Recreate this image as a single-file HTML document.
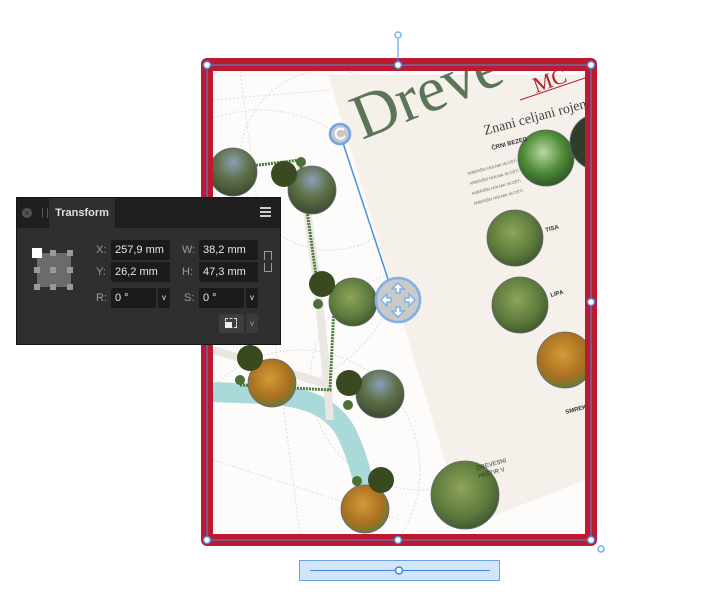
<!DOCTYPE html>
<html><head><meta charset="utf-8"><style>
body{margin:0;width:710px;height:601px;background:#fff;overflow:hidden;position:relative;font-family:"Liberation Sans",sans-serif}
svg{position:absolute;left:0;top:0}
.panel{position:absolute;left:16px;top:197px;width:265px;height:148px;background:#2f2f2f;border:1px solid #151515;box-sizing:border-box;color:#9a9a9a;font-size:11px}
.hdr{height:30px;background:#1f1f1f;position:relative}
.tab{position:absolute;left:32px;top:0;width:66px;height:30px;background:#2f2f2f;color:#e0e0e0;font-size:11px;line-height:30px;text-align:center;font-weight:bold}
.fld{position:absolute;background:#1b1b1b;color:#e6e6e6;font-size:11px;line-height:20px;padding-left:4px;box-sizing:border-box;height:20px;border-radius:2px}
.lb{position:absolute;font-size:11px;color:#999}
</style></head><body>
<svg width="710" height="601" viewBox="0 0 710 601">
<defs><clipPath id="c"><rect x="213" y="71" width="372" height="463"/></clipPath>
<radialGradient id="g1" cx=".45" cy=".4" r=".6"><stop offset="0" stop-color="#8fa35a"/><stop offset=".7" stop-color="#5b7a3c"/><stop offset="1" stop-color="#445a30"/></radialGradient>
<radialGradient id="g2" cx=".45" cy=".4" r=".6"><stop offset="0" stop-color="#d49a3a"/><stop offset=".7" stop-color="#a8701f"/><stop offset="1" stop-color="#6a7a3a"/></radialGradient>
<radialGradient id="g3" cx=".45" cy=".4" r=".6"><stop offset="0" stop-color="#b8d8a0"/><stop offset=".6" stop-color="#4e8c38"/><stop offset="1" stop-color="#2f5a28"/></radialGradient>
<radialGradient id="g4" cx=".5" cy=".3" r=".7"><stop offset="0" stop-color="#8aa0b8"/><stop offset=".5" stop-color="#5e7048"/><stop offset="1" stop-color="#3e4a30"/></radialGradient>
</defs>
<rect x="201" y="58" width="396" height="488" rx="6" fill="#bb1a30"/>
<rect x="213" y="71" width="372" height="463" fill="#fdfcfb"/>
<g clip-path="url(#c)">
<g stroke="#ddd" fill="none" stroke-width="1" stroke-dasharray="2 2">
<circle cx="300" cy="470" r="120"/><circle cx="260" cy="250" r="140"/><circle cx="420" cy="380" r="110"/><circle cx="330" cy="160" r="90"/>
<path d="M213 100 L330 90 M213 460 L400 520 M240 71 L300 534"/>
</g>
<polygon points="328,75 585,75 585,480 465,527" fill="#f5f0ea"/>
<path d="M213 392 C270 395 320 390 345 430 C360 460 362 480 368 500" stroke="#a9d9d9" stroke-width="20" fill="none"/>
<path d="M300 160 L318 290 L327 380 L330 420 M213 350 L330 385" stroke="#eae6e0" stroke-width="8" fill="none"/>
<path d="M250 166 L300 160 L318 290 M240 385 L330 390 L335 285" stroke="#4a7a3a" stroke-width="3" stroke-dasharray="2 1" fill="none"/>
<g stroke="#667" stroke-width=".8">
<circle cx="233" cy="172" r="24" fill="url(#g4)"/><circle cx="312" cy="190" r="24" fill="url(#g4)"/><circle cx="353" cy="302" r="24" fill="url(#g1)"/>
<circle cx="272" cy="383" r="24" fill="url(#g2)"/><circle cx="380" cy="394" r="24" fill="url(#g4)"/><circle cx="365" cy="509" r="24" fill="url(#g2)"/>
<circle cx="465" cy="495" r="34" fill="url(#g1)"/><circle cx="546" cy="158" r="28" fill="url(#g3)"/><circle cx="598" cy="142" r="28" fill="#2e3e28"/>
<circle cx="515" cy="238" r="28" fill="url(#g1)"/><circle cx="520" cy="305" r="28" fill="url(#g1)"/><circle cx="565" cy="360" r="28" fill="url(#g2)"/>
</g>
<g fill="#3a4a20"><circle cx="284" cy="174" r="13"/><circle cx="322" cy="284" r="13"/><circle cx="250" cy="358" r="13"/><circle cx="349" cy="383" r="13"/><circle cx="381" cy="480" r="13"/></g>
<g fill="#4a7035"><circle cx="301" cy="162" r="5"/><circle cx="318" cy="304" r="5"/><circle cx="240" cy="380" r="5"/><circle cx="348" cy="405" r="5"/><circle cx="357" cy="481" r="5"/></g>
<text x="0" y="0" transform="translate(362,140) rotate(-22)" font-family="Liberation Serif,serif" font-size="64" fill="#5a7558">Dreve</text>
<text x="0" y="0" transform="translate(536,93) rotate(-20)" font-family="Liberation Serif,serif" font-size="22" fill="#b02030">MC</text>
<path d="M520 100 L585 78" stroke="#b02030"/>
<text x="0" y="0" transform="translate(485,135) rotate(-15)" font-family="Liberation Serif,serif" font-size="14" fill="#444">Znani celjani rojeni</text>
<text x="0" y="0" transform="translate(492,150) rotate(-15)" font-size="6" font-weight="bold" fill="#333">ČRNI BEZEG</text>
<g fill="#666" font-size="4">
<text transform="translate(468,175) rotate(-15)">AMERIŠKI HOLNIK IN OŠTI</text><text transform="translate(470,185) rotate(-15)">AMERIŠKI HOLNIK IN OŠTI</text><text transform="translate(472,195) rotate(-15)">AMERIŠKI HOLNIK IN OŠTI</text><text transform="translate(474,205) rotate(-15)">AMERIŠKI HOLNIK IN OŠTI</text>
</g>
<text transform="translate(546,232) rotate(-15)" font-size="6" font-weight="bold" fill="#333">TISA</text>
<text transform="translate(551,297) rotate(-15)" font-size="6" font-weight="bold" fill="#333">LIPA</text>
<text transform="translate(566,414) rotate(-15)" font-size="6" font-weight="bold" fill="#333">SMREK</text>
<text transform="translate(477,470) rotate(-15)" font-size="6" fill="#333">DREVESNI</text>
<text transform="translate(479,478) rotate(-15)" font-size="6" fill="#333">PASTIR V</text>
</g>
<g stroke="#4a90e2" fill="none" stroke-width="1">
<rect x="207" y="65" width="384" height="475"/>
<line x1="398" y1="39" x2="398" y2="65"/>
<line x1="340" y1="134" x2="390" y2="285" stroke-width="1.5"/>
</g>
<circle cx="398" cy="35" r="3" fill="#fff" stroke="#7ab0ee" stroke-width="1.5"/>
<circle cx="601" cy="549" r="3" fill="#fff" stroke="#7ab0ee" stroke-width="1.5"/>
<g fill="#fff" stroke="#4a90e2" stroke-width="1.5">
<circle cx="207" cy="65" r="3.5"/><circle cx="398" cy="65" r="3.5"/><circle cx="591" cy="65" r="3.5"/>
<circle cx="591" cy="302" r="3.5"/><circle cx="207" cy="540" r="3.5"/><circle cx="398" cy="540" r="3.5"/><circle cx="591" cy="540" r="3.5"/>
</g>
<circle cx="340" cy="134" r="10" fill="#c8c8c8" stroke="#6fa4e8" stroke-width="2.5"/>
<path d="M344 130 A5 5 0 1 0 345 136" stroke="#fff" stroke-width="2" fill="none"/>
<circle cx="398" cy="300" r="22" fill="#c9c9c9" stroke="#7fb0ea" stroke-width="2.5"/>
<g fill="#fff" stroke="#7fb0ea" stroke-width="1.5">
<path d="M398 283 l-6 6 h4 v4 h4 v-4 h4z"/><path d="M398 317 l-6 -6 h4 v-4 h4 v4 h4z"/>
<path d="M381 300 l6 -6 v4 h4 v4 h-4 v4z"/><path d="M415 300 l-6 -6 v4 h-4 v4 h4 v4z"/>
</g>
<rect x="299.5" y="560.5" width="200" height="20" fill="#d4e5fa" stroke="#6aa2e6"/>
<line x1="310" y1="570.5" x2="490" y2="570.5" stroke="#3a86e0"/>
<circle cx="399" cy="570.5" r="3.5" fill="#fff" stroke="#3a86e0" stroke-width="1.5"/>
</svg>
<div class="panel">
<div class="hdr"><div style="position:absolute;left:5px;top:10px;width:10px;height:10px;border-radius:50%;background:#555;color:#222;font-size:9px;line-height:10px;text-align:center">×</div>
<div style="position:absolute;left:25px;top:10px;width:4px;height:10px;border-left:1px solid #555;border-right:1px solid #555"></div>
<div class="tab">Transform</div>
<div style="position:absolute;right:9px;top:9px;width:11px;height:10px;border-top:2px solid #ccc;border-bottom:2px solid #ccc;box-sizing:border-box"><div style="margin-top:2px;height:2px;background:#ccc"></div></div></div>
<div style="position:absolute;left:20px;top:55px;width:34px;height:34px;background:#6b6b6b"></div>
<div style="position:absolute;left:15px;top:50px;width:10px;height:10px;background:#fff"></div>
<div style="position:absolute;left:33px;top:52px;width:6px;height:6px;background:#999"></div><div style="position:absolute;left:50px;top:52px;width:6px;height:6px;background:#999"></div>
<div style="position:absolute;left:17px;top:69px;width:6px;height:6px;background:#999"></div><div style="position:absolute;left:33px;top:69px;width:6px;height:6px;background:#999"></div><div style="position:absolute;left:50px;top:69px;width:6px;height:6px;background:#999"></div>
<div style="position:absolute;left:17px;top:86px;width:6px;height:6px;background:#999"></div><div style="position:absolute;left:33px;top:86px;width:6px;height:6px;background:#999"></div><div style="position:absolute;left:50px;top:86px;width:6px;height:6px;background:#999"></div>
<span class="lb" style="left:79px;top:46px">X:</span><div class="fld" style="left:94px;top:42px;width:59px">257,9 mm</div>
<span class="lb" style="left:79px;top:68px">Y:</span><div class="fld" style="left:94px;top:64px;width:59px">26,2 mm</div>
<span class="lb" style="left:79px;top:94px">R:</span><div class="fld" style="left:94px;top:90px;width:45px">0 °</div><div class="fld" style="left:141px;top:90px;width:12px;font-size:8px">v</div>
<span class="lb" style="left:165px;top:46px">W:</span><div class="fld" style="left:182px;top:42px;width:59px">38,2 mm</div>
<span class="lb" style="left:165px;top:68px">H:</span><div class="fld" style="left:182px;top:64px;width:59px">47,3 mm</div>
<span class="lb" style="left:167px;top:94px">S:</span><div class="fld" style="left:182px;top:90px;width:45px">0 °</div><div class="fld" style="left:229px;top:90px;width:12px;font-size:8px">v</div>
<div style="position:absolute;left:247px;top:53px;width:6px;height:8px;border:1px solid #999;border-bottom:none"></div><div style="position:absolute;left:247px;top:65px;width:6px;height:8px;border:1px solid #999;border-top:none"></div>
<div style="position:absolute;left:202px;top:116px;width:25px;height:19px;background:#3e3e3e;border-radius:2px"><div style="position:absolute;left:6px;top:4px;width:12px;height:10px;border:1px dashed #ddd;box-sizing:border-box"></div><div style="position:absolute;left:6px;top:8px;width:7px;height:6px;background:#eee"></div></div>
<div style="position:absolute;left:229px;top:116px;width:12px;height:19px;background:#3a3a3a;font-size:8px;text-align:center;line-height:19px">v</div>
</div>
</body></html>
